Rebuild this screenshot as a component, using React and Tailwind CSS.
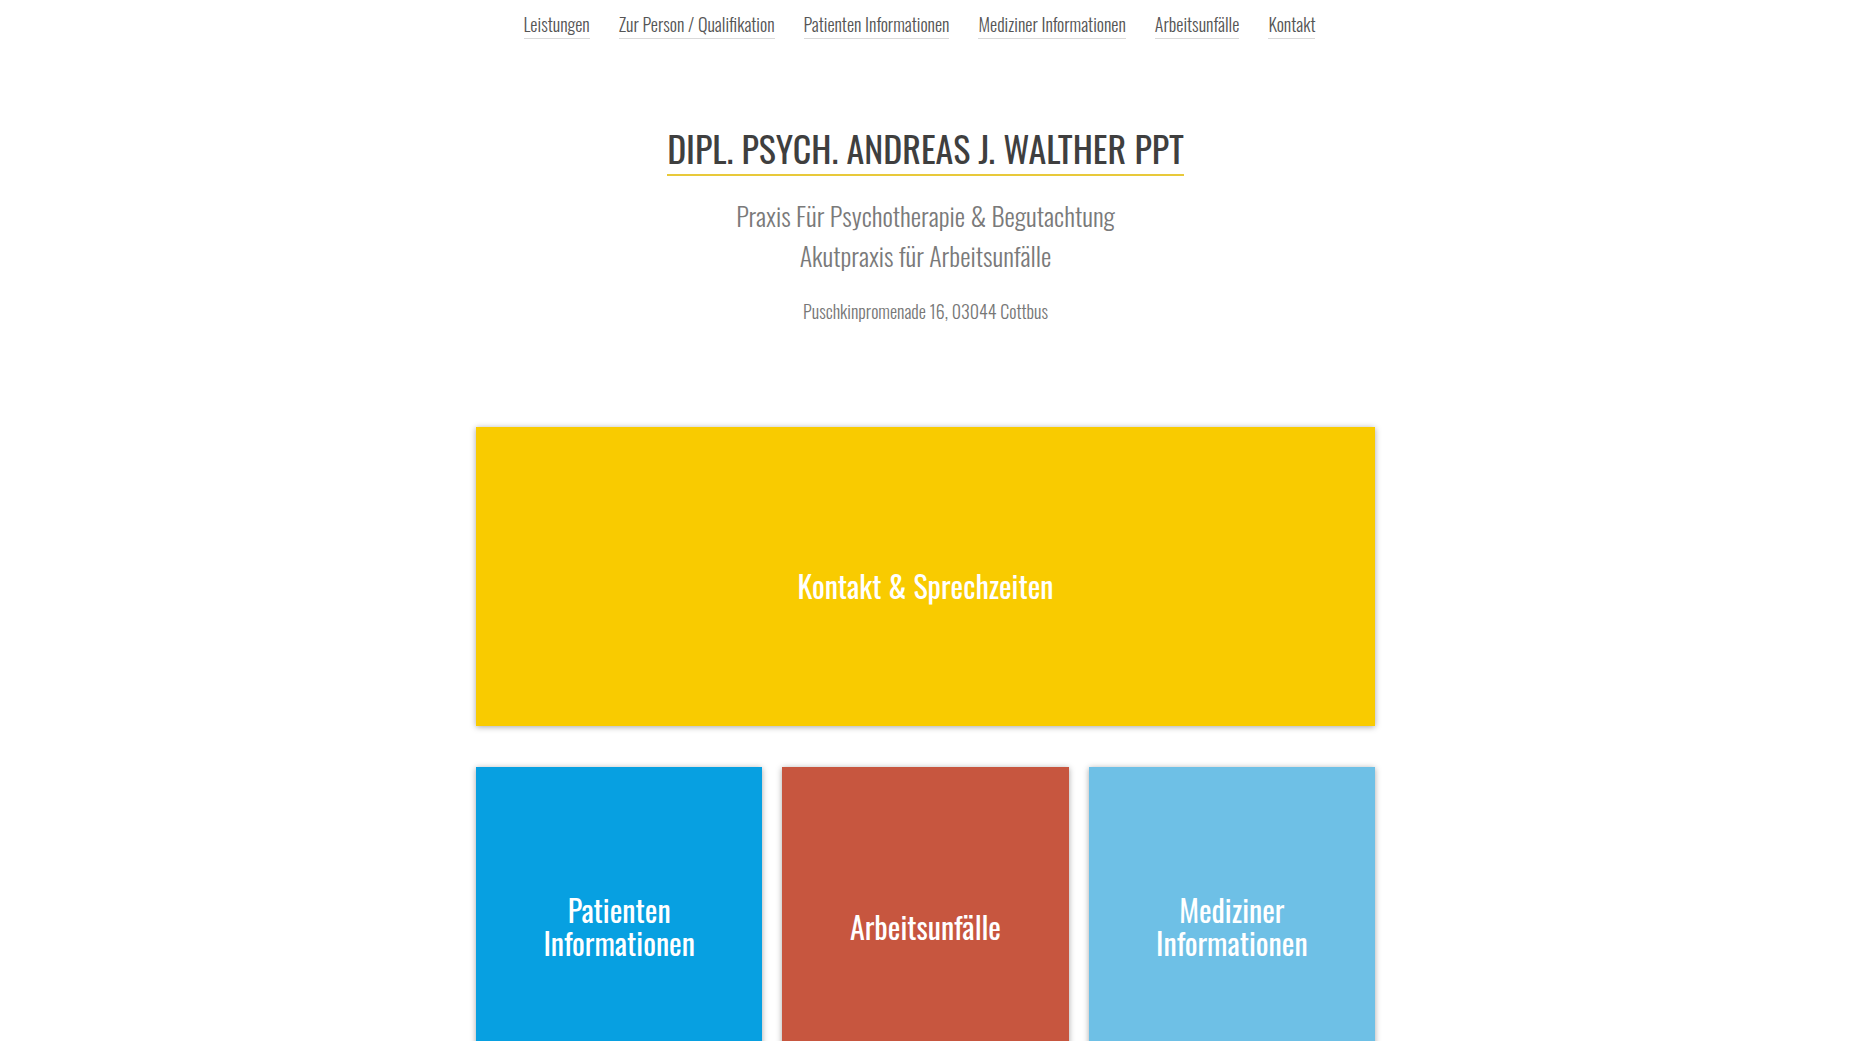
import React from 'react';

const navItems = [
  'Leistungen',
  'Zur Person / Qualifikation',
  'Patienten Informationen',
  'Mediziner Informationen',
  'Arbeitsunfälle',
  'Kontakt',
];

const tiles = [
  { label: ['Patienten', 'Informationen'], color: 'bg-[#07a0e1]' },
  { label: ['Arbeitsunfälle'], color: 'bg-[#c7563f]' },
  { label: ['Mediziner', 'Informationen'], color: 'bg-[#6ec0e6]' },
];

const font = "font-['Oswald','Liberation_Sans_Narrow','DejaVu_Sans_Condensed',sans-serif]";

export default function App() {
  return (
    <div className={`h-[1041px] overflow-hidden bg-white pr-[25px] ${font}`}>
      {/* Top navigation */}
      <nav className="flex justify-center gap-[29px] pt-[12px] pr-[12px]">
        {navItems.map((item) => (
          <a
            key={item}
            href="#"
            className="border-b border-[#d9d9d9] pb-[2px] text-[18px] font-light leading-[24px] text-[#555]"
          >
            {item}
          </a>
        ))}
      </nav>

      {/* Heading */}
      <header className="mt-[87px] flex flex-col items-center">
        <h1 className="border-b-2 border-[#e8c93a] pb-[4px] text-[36px] font-normal leading-[44px] text-[#3f3f3f]">
          DIPL. PSYCH. ANDREAS J. WALTHER PPT
        </h1>
        <div className="mt-[20px] text-center text-[26px] font-light leading-[40px] text-[#7a7a7a]">
          <p>Praxis Für Psychotherapie &amp; Begutachtung</p>
          <p>Akutpraxis für Arbeitsunfälle</p>
        </div>
        <p className="mt-[23px] text-[18px] font-light leading-[24px] text-[#777]">
          Puschkinpromenade 16, 03044 Cottbus
        </p>
      </header>

      {/* Tiles */}
      <main className="mx-auto mt-[104px] w-[899px]">
        <a
          href="#"
          className="flex h-[299px] items-center justify-center bg-[#f9cb00] pt-[18px] shadow-[0_1px_6px_rgba(0,0,0,0.35)]"
        >
          <span className="text-[30px] font-normal text-white">Kontakt &amp; Sprechzeiten</span>
        </a>

        <div className="mt-[41px] grid grid-cols-3 gap-[20px]">
          {tiles.map((tile) => (
            <a
              key={tile.label.join(' ')}
              href="#"
              className={`flex h-[318px] items-center justify-center text-center ${tile.color} shadow-[0_1px_6px_rgba(0,0,0,0.35)]`}
            >
              <span className="text-[30px] font-normal leading-[33px] text-white">
                {tile.label.map((line) => (
                  <span key={line} className="block">
                    {line}
                  </span>
                ))}
              </span>
            </a>
          ))}
        </div>
      </main>
    </div>
  );
}
